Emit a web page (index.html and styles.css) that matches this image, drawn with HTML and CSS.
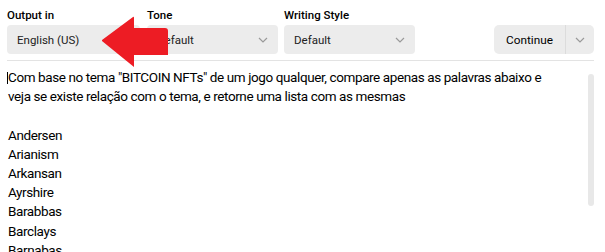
FILE: index.html
```html
<!DOCTYPE html>
<html lang="pt">
<head>
<meta charset="utf-8">
<link rel="stylesheet" href="styles.css">
</head>
<body>
<div class="page">
  <div class="toolbar">
    <div class="field w1">
      <div class="label">Output in</div>
      <div class="select"><span>English (US)</span><svg class="chev" viewBox="0 0 10 6" width="10" height="6"><path d="M1 1l4 4 4-4" fill="none" stroke="#9a9a9a" stroke-width="1.2"/></svg></div>
    </div>
    <div class="field w2">
      <div class="label">Tone</div>
      <div class="select"><span>Default</span><svg class="chev" viewBox="0 0 10 6" width="10" height="6"><path d="M1 1l4 4 4-4" fill="none" stroke="#9a9a9a" stroke-width="1.2"/></svg></div>
    </div>
    <div class="field w3">
      <div class="label">Writing Style</div>
      <div class="select"><span>Default</span><svg class="chev" viewBox="0 0 10 6" width="10" height="6"><path d="M1 1l4 4 4-4" fill="none" stroke="#9a9a9a" stroke-width="1.2"/></svg></div>
    </div>
    <div class="spacer"></div>
    <div class="split">
      <div class="split-main">Continue</div>
      <div class="split-menu"><svg viewBox="0 0 10 6" width="10" height="6"><path d="M1 1l4 4 4-4" fill="none" stroke="#9a9a9a" stroke-width="1.2"/></svg></div>
    </div>
  </div>
  <div class="divider"></div>
  <div class="editor">
    <div class="text">
      <div class="line"><span class="caret"></span>Com base no tema "BITCOIN NFTs" de um jogo qualquer, compare apenas as palavras abaixo e</div>
      <div class="line">veja se existe relação com o tema, e retorne uma lista com as mesmas</div>
      <div class="line blank"></div>
      <div class="line">Andersen</div>
      <div class="line">Arianism</div>
      <div class="line">Arkansan</div>
      <div class="line">Ayrshire</div>
      <div class="line">Barabbas</div>
      <div class="line">Barclays</div>
      <div class="line">Barnabas</div>
    </div>
    <div class="scrollbar"></div>
  </div>
  <svg class="arrow" viewBox="0 0 70 54" width="70" height="54">
    <path d="M1 24 L32 1 Q33 0 33 2 L33 12 L64 12 Q67 12 67 15 L67 39 L33 39 L33 51 L1 25 Z" fill="#ed1c24"/>
  </svg>
</div>
</body>
</html>
```

FILE: styles.css
```css
html, body {
  margin: 0;
  padding: 0;
  background: #fff;
}
.page {
  position: relative;
  width: 605px;
  height: 252px;
  overflow: hidden;
  font-family: Roboto, "Liberation Sans", sans-serif;
  color: #0d0d0d;
}
.toolbar {
  display: flex;
  align-items: flex-end;
  padding: 9px 11px 0 7px;
}
.field {
  display: flex;
  flex-direction: column;
  gap: 3px;
}
.w1 { width: 133px; margin-right: 7px; }
.w2 { width: 131px; margin-right: 6px; }
.w3 { width: 131px; }
.label {
  font-size: 11.5px;
  font-weight: 500;
  line-height: 13px;
  color: #000;
}
.select {
  height: 29px;
  background: #ececec;
  border-radius: 4px;
  display: flex;
  align-items: center;
  justify-content: space-between;
  padding: 0 10px 0 10px;
  font-size: 11.5px;
  color: #222;
}
.chev { flex: none; margin-top: 1px; }
.spacer { flex: 1; }
.split {
  width: 100px;
  height: 29px;
  display: flex;
  background: #ececec;
  border-radius: 5px;
  font-size: 11.8px;
  color: #000;
}
.split-main {
  width: 71px;
  display: flex;
  align-items: center;
  justify-content: center;
  border-right: 1px solid #dcdcdc;
}
.split-menu {
  flex: 1;
  display: flex;
  align-items: center;
  justify-content: center;
}
.divider {
  height: 1px;
  background: #e3e3e3;
  margin: 6px 11px 0 7px;
}
.editor {
  display: flex;
  padding: 7px 11px 0 7px;
}
.text {
  flex: 1;
  font-size: 13.5px;
  letter-spacing: -0.4px;
  line-height: 19.2px;
  color: #000;
  padding-left: 1px;
}
.line { white-space: nowrap; position: relative; }
.blank { height: 19.2px; }
.caret {
  position: absolute;
  left: -1px;
  top: 4px;
  width: 1px;
  height: 12px;
  background: #000;
}
.scrollbar {
  flex: none;
  width: 6px;
  height: 132px;
  margin-top: 6px;
  background: #e8e8e8;
  border-radius: 3px;
}
.arrow {
  position: absolute;
  left: 101px;
  top: 16px;
}
```
